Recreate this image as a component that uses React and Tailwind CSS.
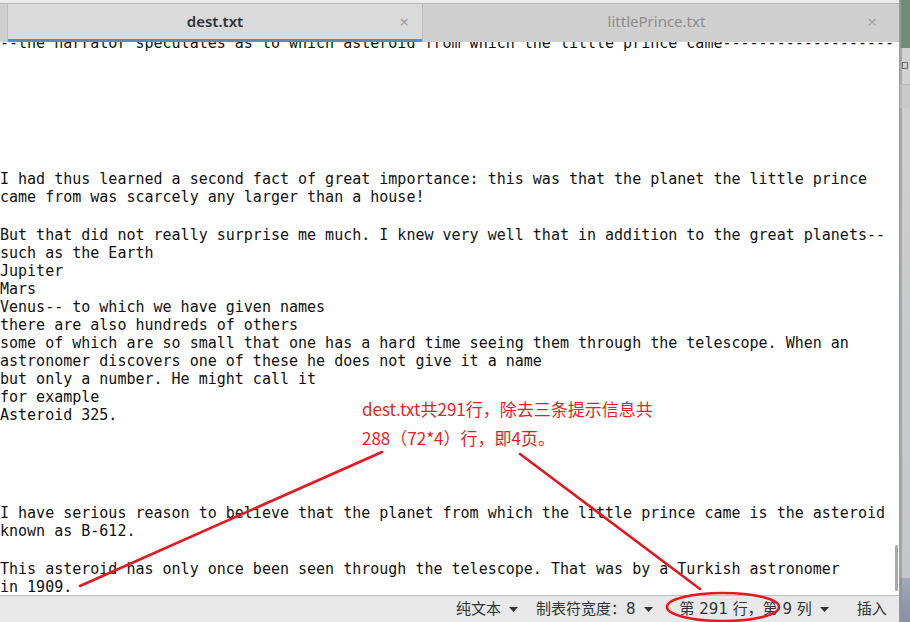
import React from 'react';

const lines = [
  '--the narrator speculates as to which asteroid from which the little prince came-------------------',
  'gap18', null, null, null, null, null,
  'I had thus learned a second fact of great importance: this was that the planet the little prince',
  'came from was scarcely any larger than a house!',
  null,
  'But that did not really surprise me much. I knew very well that in addition to the great planets--',
  'such as the Earth',
  'Jupiter',
  'Mars',
  'Venus-- to which we have given names',
  'there are also hundreds of others',
  'some of which are so small that one has a hard time seeing them through the telescope. When an',
  'astronomer discovers one of these he does not give it a name',
  'but only a number. He might call it',
  'for example',
  'Asteroid 325.',
  null, null, null, null,
  'I have serious reason to believe that the planet from which the little prince came is the asteroid',
  'known as B-612.',
  null,
  'This asteroid has only once been seen through the telescope. That was by a Turkish astronomer',
  'in 1909.',
];

const Caret = () => (
  <svg width="9" height="5" viewBox="0 0 9 5" className="ml-[8px]">
    <path d="M0 0 L9 0 L4.5 5 Z" fill="#2e3436" />
  </svg>
);

const TabBar = () => (
  <div className="flex flex-col h-[42px] shrink-0 font-['Noto_Sans',sans-serif]">
    <div className="h-[4px] bg-[#ececec] border-b border-[#b4b4b4]" />
    <div className="flex flex-1 bg-[#cfcfcf]">
      <div className="w-[8px] border-r border-[#bcbcbc]" />
      <div className="relative flex items-center justify-center w-[415px] bg-[#dadada] border-r border-[#bcbcbc] pb-[3px]">
        <span className="text-[15px] font-semibold text-[#2e3436]">dest.txt</span>
        <div className="absolute right-[13px] top-0 bottom-[3px] flex items-center">
          <span className="text-[17px] leading-none text-[#a0a0a0]">×</span>
        </div>
        <div className="absolute left-0 right-0 bottom-0 h-[3px] bg-[#4a90d9]" />
      </div>
      <div className="relative flex items-center justify-center w-[467px] pb-[3px]">
        <span className="text-[15px] text-[#8d8d8d]">littlePrince.txt</span>
        <div className="absolute right-[13px] top-0 bottom-[3px] flex items-center">
          <span className="text-[17px] leading-none text-[#a8a8a8]">×</span>
        </div>
      </div>
      <div className="flex-1" />
    </div>
  </div>
);

const StatusBar = () => (
  <div className="flex items-center h-[27px] shrink-0 bg-[#e8e8e8] border-t border-[#c0c0c0] font-['DejaVu_Sans','Noto_Sans_CJK_SC',sans-serif] text-[15px] text-[#2e3436]">
    <div className="flex items-center ml-[456px]">
      <span>纯文本</span>
      <Caret />
    </div>
    <div className="flex items-center ml-[18px]">
      <span>制表符宽度：8</span>
      <Caret />
    </div>
    <div className="flex items-center ml-[27px]">
      <span>第 291 行，第 9 列</span>
      <Caret />
    </div>
    <span className="ml-[28px]">插入</span>
  </div>
);

const DesktopStrip = () => (
  <div className="flex flex-col w-[10px] h-full">
    <div className="h-[48px] bg-[#6f8b79] border-l border-[#8aa493]" />
    <div className="relative h-[36px] bg-[#d2d2d2] border-l-2 border-[#a9a9a9]">
      <div className="absolute left-0 top-[14px] w-[6px] h-[7px] border border-[#6e6e6e]" />
    </div>
    <div className="h-[24px] bg-[#c9c9c9] border-l-2 border-[#a4a4a4] border-t border-[#b9b9b9]" />
    <div className="flex-1 bg-gradient-to-b from-[#cfcfcf] to-[#c4c6cc] border-l-2 border-[#a6a6a6]" />
    <div className="h-[44px] bg-gradient-to-b from-[#a4a9b8] to-[#878ea6] border-l-2 border-[#8e93a0]" />
  </div>
);

const Annotation = () => (
  <>
    <div className="absolute left-[362px] top-[394px] text-[17px] leading-[29px] text-[#ec1c24] font-['Noto_Sans_CJK_SC',sans-serif]">
      <div>dest.txt共291行，除去三条提示信息共</div>
      <div>288（72*4）行，即4页。</div>
    </div>
    <svg className="absolute left-0 top-0 pointer-events-none" width="910" height="622" viewBox="0 0 910 622">
      <g stroke="#e8161e" strokeWidth="2.6" fill="none" strokeLinecap="round">
        <line x1="382" y1="452" x2="80" y2="586" />
        <line x1="520" y1="454" x2="700" y2="589" />
        <ellipse cx="723" cy="607" rx="56" ry="14" />
      </g>
    </svg>
  </>
);

export default function App() {
  return (
    <div className="relative flex w-[910px] h-[622px] overflow-hidden bg-white">
      <div className="flex flex-col w-[900px] h-full border-r border-[#9c9c9c]">
        <TabBar />
        <div className="relative flex-1 overflow-hidden bg-white font-['DejaVu_Sans_Mono',monospace] text-[15px] text-[#111]">
          <div className="-mt-[8px] whitespace-pre">
            {lines.map((line, i) =>
              line === null ? (
                <div key={i} className="h-[20px]" />
              ) : line === 'gap18' ? (
                <div key={i} className="h-[18px]" />
              ) : (
                <div key={i} className="h-[18px] leading-[18px]">{line}</div>
              )
            )}
          </div>
          <div className="absolute right-[1px] top-[503px] w-[3px] h-[46px] rounded-full bg-[#a8a8a8]" />
        </div>
        <StatusBar />
      </div>
      <DesktopStrip />
      <Annotation />
    </div>
  );
}
